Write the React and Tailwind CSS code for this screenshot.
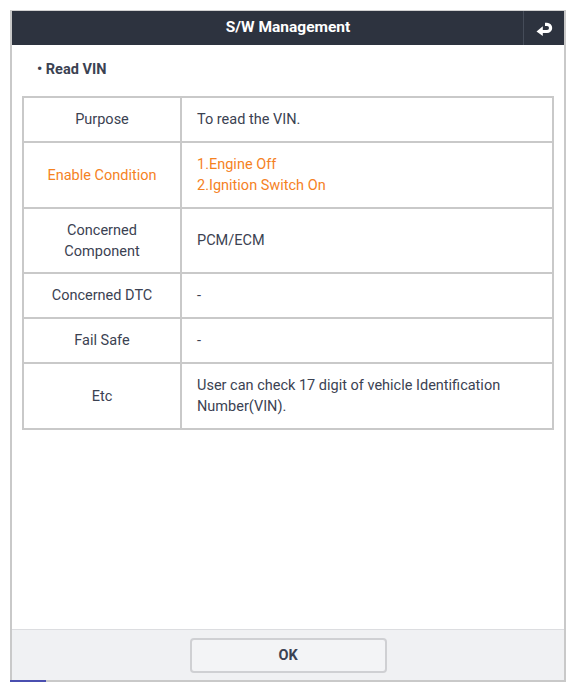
import React from "react";

const rows = [
  { label: ["Purpose"], value: ["To read the VIN."], h: "h-[45px]" },
  { label: ["Enable Condition"], value: ["1.Engine Off", "2.Ignition Switch On"], h: "h-[66px]", orange: true },
  { label: ["Concerned", "Component"], value: ["PCM/ECM"], h: "h-[65px]" },
  { label: ["Concerned DTC"], value: ["-"], h: "h-[45px]" },
  { label: ["Fail Safe"], value: ["-"], h: "h-[45px]" },
  { label: ["Etc"], value: ["User can check 17 digit of vehicle Identification", "Number(VIN)."], h: "h-[64px]", last: true },
];

export default function App() {
  return (
    <div className="w-[576px] h-[692px] bg-white pt-[10px] pl-[10px]" style={{ fontFamily: "Roboto, 'Liberation Sans', sans-serif" }}>
      <div className="w-[556px] h-[672px] border-2 border-t border-[#c9c9c9] border-t-[#d2d2d2] flex flex-col">
        <div className="h-[34px] bg-[#2d333f] flex items-stretch shrink-0">
          <div className="w-[41px]" />
          <div className="flex-1 flex items-center justify-center text-white text-[15.5px] font-bold">S/W Management</div>
          <div className="w-[41px] border-l border-[#454c59] flex items-center justify-center">
            <svg width="17" height="15" viewBox="0 0 17 15">
              <path d="M6 10.5 H11 A3.6 3.6 0 0 0 11 3.3 H9" fill="none" stroke="white" strokeWidth="3.2" />
              <path d="M0.5 10.5 L6.8 5.2 L6.8 15 Z" fill="white" />
            </svg>
          </div>
        </div>
        <div className="flex-1 px-[10px] pt-[15px]">
          <div className="h-[20px] flex items-center pl-[15px] text-[14.5px] font-bold text-[#3b4252]">• Read VIN</div>
          <div className="mt-[16px] border-2 border-[#c9c9c9] text-[14.5px] text-[#3b4252]">
            {rows.map((r, i) => (
              <div key={i} className={`flex ${r.h} ${r.last ? "" : "border-b-2 border-[#c9c9c9]"}`}>
                <div className={`w-[158px] shrink-0 border-r-2 border-[#c9c9c9] flex flex-col items-center justify-center text-center leading-[21px] ${r.orange ? "text-[#f5821f]" : ""}`}>
                  {r.label.map((t, j) => (<div key={j}>{t}</div>))}
                </div>
                <div className={`flex-1 flex flex-col justify-center pl-[15px] leading-[21px] ${r.orange ? "text-[#f5821f]" : ""}`}>
                  {r.value.map((t, j) => (<div key={j}>{t}</div>))}
                </div>
              </div>
            ))}
          </div>
        </div>
        <div className="h-[51px] shrink-0 bg-[#f0f1f3] border-t border-[#dcdde0] flex justify-center pt-[8px]">
          <button className="w-[197px] h-[35px] border-2 border-[#cfd0d3] rounded-[4px] bg-[#f3f4f6] text-[14.5px] font-bold text-[#3b4252]">OK</button>
        </div>
      </div>
      <div className="mt-[-2px] w-[36px] h-[2px] bg-[#4a4fb0]" />
    </div>
  );
}
